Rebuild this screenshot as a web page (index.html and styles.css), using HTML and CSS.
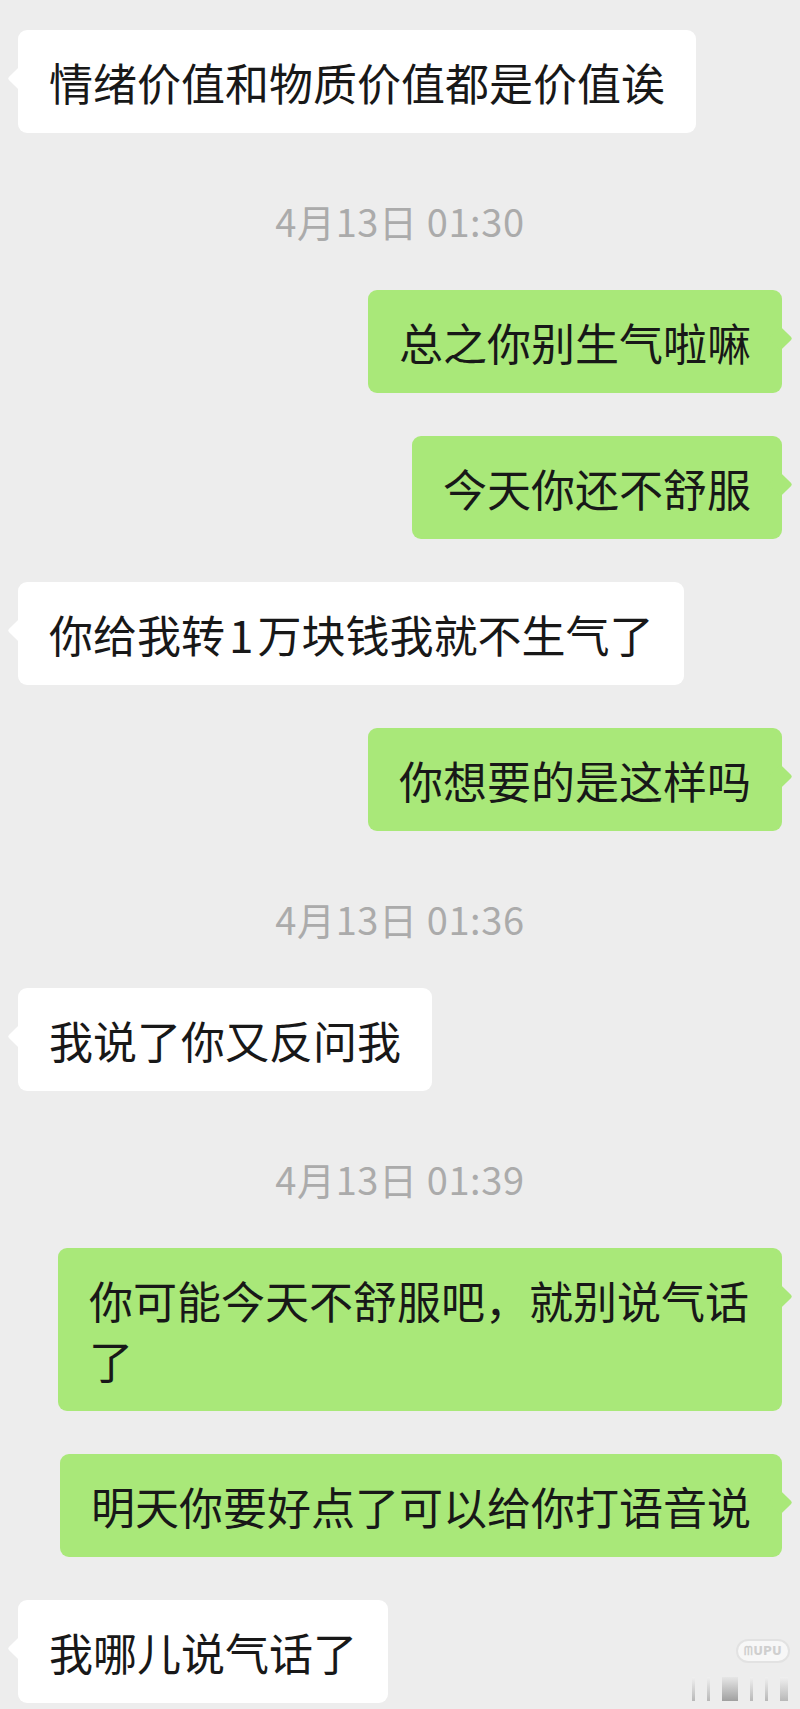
FILE: index.html
```html
<!DOCTYPE html>
<html lang="zh-CN">
<head>
<meta charset="utf-8">
<title>聊天记录</title>
<link rel="stylesheet" href="styles.css">
</head>
<body>
<div class="chat">
  <div class="row left"><div class="bubble white">情绪价值和物质价值都是价值诶</div></div>
  <div class="time">4月13日 01:30</div>
  <div class="row right"><div class="bubble green">总之你别生气啦嘛</div></div>
  <div class="row right"><div class="bubble green">今天你还不舒服</div></div>
  <div class="row left"><div class="bubble white">你给我转<span class="num">1</span>万块钱我就不生气了</div></div>
  <div class="row right"><div class="bubble green">你想要的是这样吗</div></div>
  <div class="time">4月13日 01:36</div>
  <div class="row left"><div class="bubble white">我说了你又反问我</div></div>
  <div class="time">4月13日 01:39</div>
  <div class="row right"><div class="bubble green">你可能今天不舒服吧，就别说气话了</div></div>
  <div class="row right"><div class="bubble green">明天你要好点了可以给你打语音说</div></div>
  <div class="row left"><div class="bubble white">我哪儿说气话了</div></div>
</div>
<div class="watermark">
  <div class="wm-logo">ᗰUPU</div>
  <div class="wm-bars">
    <span class="b1"></span><span class="b2"></span><span class="b3"></span><span class="b4"></span><span class="b5"></span><span class="b6"></span>
  </div>
</div>
</body>
</html>
```

FILE: styles.css
```css
html, body {
  margin: 0;
  padding: 0;
  background: #ededed;
}
body {
  width: 800px;
  height: 1709px;
  overflow: hidden;
  position: relative;
  font-family: "Noto Sans CJK SC", "Noto Sans", sans-serif;
}
.chat {
  display: flex;
  flex-direction: column;
  gap: 43px;
  padding: 30px 18px 0 18px;
}
.row {
  display: flex;
}
.row.left { justify-content: flex-start; }
.row.right { justify-content: flex-end; }
.bubble {
  position: relative;
  box-sizing: border-box;
  max-width: 724px;
  padding: 21.5px 31px;
  border-radius: 9px;
  font-size: 44px;
  line-height: 60px;
  color: #181818;
  letter-spacing: 0;
}
.bubble .num {
  margin: 0 4px;
}
.bubble.white { background: #ffffff; }
.bubble.green { background: #a9e879; }
.bubble::before {
  content: "";
  position: absolute;
  top: 40px;
  width: 17px;
  height: 17px;
  border-radius: 2px;
  transform: rotate(45deg);
}
.bubble.white::before {
  left: -7px;
  background: #ffffff;
}
.bubble.green::before {
  right: -7px;
  background: #a9e879;
}
.time {
  box-sizing: border-box;
  height: 71px;
  padding-top: 25px;
  text-align: center;
  font-size: 38px;
  line-height: 40px;
  color: #ababab;
  letter-spacing: 0.6px;
}
.watermark {
  position: absolute;
  right: 8px;
  bottom: 8px;
  width: 100px;
  height: 62px;
}
.wm-logo {
  position: absolute;
  right: 2px;
  top: 0;
  width: 54px;
  height: 24px;
  border-radius: 12px;
  background: #f7f7f7;
  border: 2px solid #e2e2e2;
  box-sizing: border-box;
  font-family: "DejaVu Sans", sans-serif;
  font-size: 12px;
  line-height: 20px;
  font-weight: bold;
  color: #cfcfcf;
  text-align: center;
}
.wm-bars {
  position: absolute;
  left: 0;
  bottom: 0;
  width: 100px;
  height: 26px;
  display: flex;
  gap: 12px;
  align-items: flex-end;
}
.wm-bars span {
  display: block;
  height: 24px;
  width: 3px;
  background: linear-gradient(#f0f0f0, #b8b8b8);
}
.wm-bars .b3 { width: 16px; background: linear-gradient(#e6e6e6, #a0a0a0); }
.wm-bars .b6 { width: 8px; }
```
